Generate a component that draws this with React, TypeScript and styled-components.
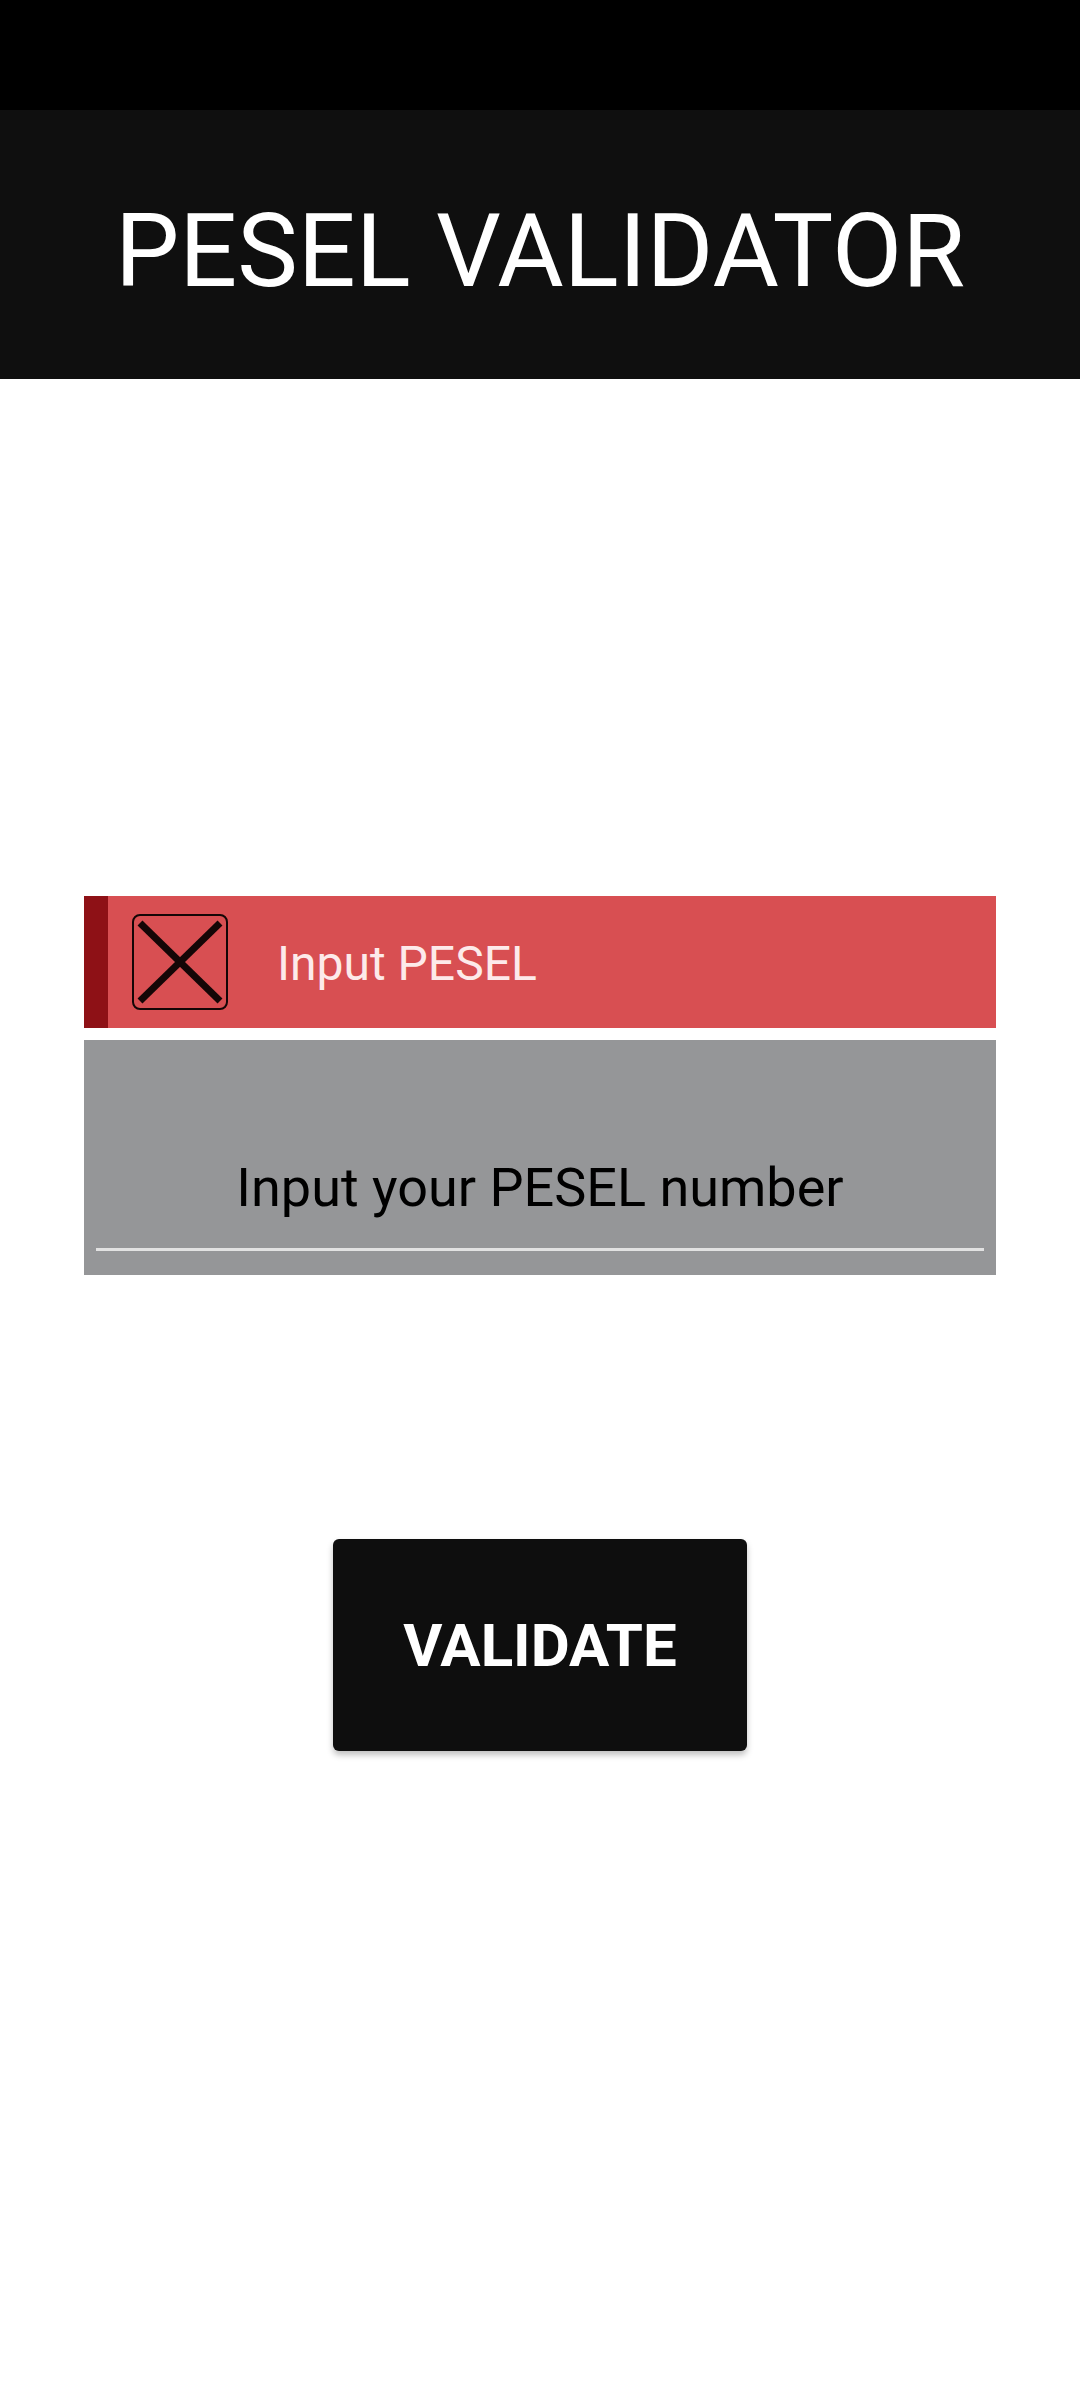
import React from "react";
import styled, { createGlobalStyle } from "styled-components";

const Global = createGlobalStyle`
  html, body { margin: 0; padding: 0; background: #ffffff; }
  body { font-family: Roboto, "Noto Sans", Arial, sans-serif; }
  * { box-sizing: border-box; }
`;

const Screen = styled.div`
  width: 1080px;
  min-height: 2400px;
  background: #ffffff;
  display: flex;
  flex-direction: column;
`;

const StatusBar = styled.div`
  height: 110px;
  background: #000000;
`;

const AppBar = styled.header`
  height: 269px;
  background: #0f0f0f;
  display: flex;
  align-items: center;
  justify-content: center;
`;

const Title = styled.h1`
  margin: 0;
  color: #ffffff;
  font-family: Roboto, sans-serif;
  font-weight: 400;
  font-size: 102px;
  line-height: 1;
  letter-spacing: 0;
  transform: translateY(6px);
`;

const Content = styled.main`
  display: flex;
  flex-direction: column;
  align-items: center;
  padding: 517px 84px 0;
`;

const Form = styled.div`
  width: 100%;
  display: flex;
  flex-direction: column;
  gap: 12px;
`;

const Banner = styled.div`
  height: 132px;
  background: #d84f52;
  border-left: 24px solid #8e1116;
  display: flex;
  align-items: center;
  padding-left: 24px;
  gap: 49px;
`;

const IconBox = styled.div`
  width: 96px;
  height: 96px;
  display: flex;
  align-items: center;
  justify-content: center;
  flex: none;
`;

const BannerText = styled.span`
  color: #fdeaea;
  font-size: 48px;
  font-weight: 400;
  font-family: Roboto, sans-serif;
  transform: translateY(1px);
`;

const InputBox = styled.div`
  height: 235px;
  background: #959698;
  display: flex;
  flex-direction: column;
  justify-content: flex-end;
  padding: 0 12px 24px;
`;

const Placeholder = styled.div`
  color: #000000;
  font-size: 54px;
  font-family: Roboto, sans-serif;
  text-align: center;
  line-height: 1;
  padding-bottom: 33px;
`;

const Underline = styled.div`
  height: 3px;
  background: #e2e2e2;
`;

const ValidateButton = styled.button`
  margin-top: 264px;
  width: 414px;
  height: 212px;
  border: none;
  border-radius: 6px;
  background: #0e0e0e;
  color: #ffffff;
  font-family: Roboto, sans-serif;
  font-weight: 700;
  font-size: 60px;
  letter-spacing: 0;
  box-shadow: 0 4px 6px rgba(0, 0, 0, 0.25);
  cursor: pointer;
`;

const ErrorIcon = () => (
  <svg width="96" height="96" viewBox="0 0 96 96">
    <rect x="1" y="1" width="94" height="94" rx="7" fill="none" stroke="#140606" strokeWidth="2" />
    <line x1="8" y1="9" x2="88" y2="87" stroke="#140606" strokeWidth="7" />
    <line x1="88" y1="9" x2="8" y2="87" stroke="#140606" strokeWidth="7" />
  </svg>
);

export default function App() {
  return (
    <>
      <Global />
      <Screen>
        <StatusBar />
        <AppBar>
          <Title>PESEL VALIDATOR</Title>
        </AppBar>
        <Content>
          <Form>
            <Banner>
              <IconBox>
                <ErrorIcon />
              </IconBox>
              <BannerText>Input PESEL</BannerText>
            </Banner>
            <InputBox>
              <Placeholder>Input your PESEL number</Placeholder>
              <Underline />
            </InputBox>
          </Form>
          <ValidateButton>VALIDATE</ValidateButton>
        </Content>
      </Screen>
    </>
  );
}
